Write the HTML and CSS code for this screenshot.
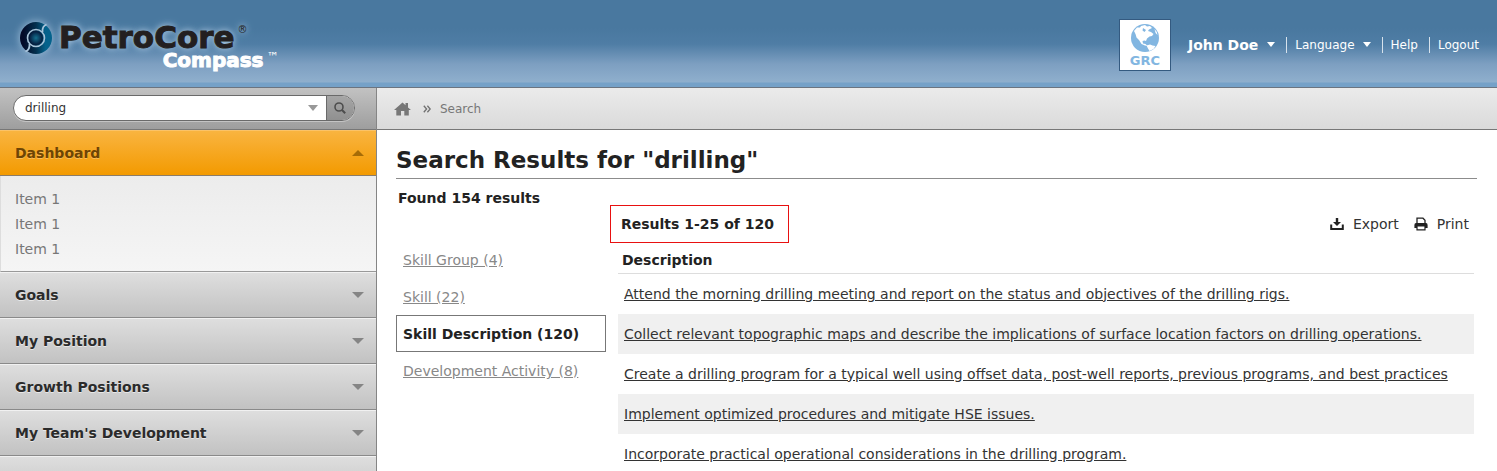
FILE: index.html
```html
<!DOCTYPE html>
<html lang="en">
<head>
<meta charset="utf-8">
<title>PetroCore Compass - Search</title>
<link rel="stylesheet" href="styles.css">
</head>
<body>
<div class="app">
  <header class="header">
    <div class="brand">
      <svg class="brand-mark" viewBox="0 0 34 34" aria-hidden="true">
        <defs>
          <linearGradient id="ring" x1="0" x2="1" y1="0" y2="0"><stop offset="0.1" stop-color="#030a28"/><stop offset="0.5" stop-color="#04304e"/><stop offset="0.8" stop-color="#04628c"/></linearGradient>
          <radialGradient id="core"><stop offset="0" stop-color="#14708f"/><stop offset="1" stop-color="#04183a"/></radialGradient>
        </defs>
        <circle cx="17" cy="17" r="16" fill="url(#ring)"/>
        <circle cx="17" cy="17" r="8.5" fill="none" stroke="#a9c4da" stroke-width="1.6"/>
        <path d="M27.5 3.5Q23 5 23.5 11M6.5 30.5Q11 29 10.5 23" fill="none" stroke="#a9c4da" stroke-width="1.8"/>
        <circle cx="17" cy="17" r="7" fill="url(#core)"/>
      </svg>
      <div class="brand-text">
        <span class="brand-name">PetroCore<sup class="brand-reg">®</sup></span>
        <span class="brand-product">Compass<sup class="brand-tm">™</sup></span>
      </div>
    </div>
    <nav class="account">
      <a class="grc" href="#">
        <svg class="globe" viewBox="0 0 28 28" aria-hidden="true">
          <circle cx="14" cy="14" r="14" fill="#82b6e1"/>
          <path fill="#fff" d="M3 7L6 3.5L9 3.5L10 2L14 1L16 2.5L19 2L21 4L18 5.5L17 7L20 8L22.5 10L21 12L18.5 12.5L16 14.5L15 17L13.5 16.5L11.5 17L12 19.5L14.5 20L16.5 22L14 21.5L10.5 20L8 16L5.5 13.5L4.5 10Z"/>
          <path fill="#fff" d="M15.5 21.5L19 20.5L21.5 21.5L24.5 22L22.5 25L18.5 27L17 24.5Z"/>
          <path fill="#fff" d="M23.5 5L25.8 8L26.5 11L24.6 9Z"/>
          <path fill="#82b6e1" d="M12 4L15 6L13.5 8L11.5 6.5Z"/>
        </svg>
        <span>GRC</span>
      </a>
      <button class="user" type="button">John Doe <svg class="caret-small" viewBox="0 0 8 5" aria-hidden="true"><path d="M0 0H8L4 5Z" fill="#fff"/></svg></button>
      <button class="account-item" type="button">Language <svg class="caret-small" viewBox="0 0 8 5" aria-hidden="true"><path d="M0 0H8L4 5Z" fill="#fff"/></svg></button>
      <a class="account-item" href="#">Help</a>
      <a class="account-item" href="#">Logout</a>
    </nav>
  </header>

  <div class="columns">
    <aside class="sidebar">
      <form class="search">
        <div class="search-field">
          <input class="search-input" type="text" value="drilling" aria-label="Search">
          <button class="search-scope" type="button" aria-label="Search options"><svg class="caret-scope" viewBox="0 0 10 6" aria-hidden="true"><path d="M0 0H10L5 6Z" fill="#999"/></svg></button>
          <button class="search-go" type="button" aria-label="Go"><svg class="lens" viewBox="0 0 12 12" aria-hidden="true"><circle cx="5" cy="5" r="4" fill="none" stroke="#4d4d4d" stroke-width="1.6"/><path d="M8 8L11.2 11.2" stroke="#4d4d4d" stroke-width="2"/></svg></button>
        </div>
      </form>
      <nav class="menu">
        <button class="menu-head menu-head-open" type="button">Dashboard <svg class="caret" viewBox="0 0 12 6" aria-hidden="true"><path d="M0 6H12L6 0Z" fill="#a66c07"/></svg></button>
        <div class="submenu">
          <a href="#">Item 1</a>
          <a href="#">Item 1</a>
          <a href="#">Item 1</a>
        </div>
        <button class="menu-head" type="button">Goals <svg class="caret" viewBox="0 0 12 6" aria-hidden="true"><path d="M0 0H12L6 6Z" fill="#858585"/></svg></button>
        <button class="menu-head" type="button">My Position <svg class="caret" viewBox="0 0 12 6" aria-hidden="true"><path d="M0 0H12L6 6Z" fill="#858585"/></svg></button>
        <button class="menu-head" type="button">Growth Positions <svg class="caret" viewBox="0 0 12 6" aria-hidden="true"><path d="M0 0H12L6 6Z" fill="#858585"/></svg></button>
        <button class="menu-head" type="button">My Team's Development <svg class="caret" viewBox="0 0 12 6" aria-hidden="true"><path d="M0 0H12L6 6Z" fill="#858585"/></svg></button>
        <div class="menu-head"></div>
      </nav>
    </aside>

    <div class="content">
      <nav class="crumbs" aria-label="Breadcrumb">
        <a class="home" href="#" aria-label="Home"><svg viewBox="0 0 17 14" aria-hidden="true"><path fill="#777" d="M8.5 0.5L11.5 3.2V1H14V5.4L17 8H14.8V13.5H10.3V9H7V13.5H2.3V8H0Z"/></svg></a>
        <svg class="chevrons" viewBox="0 0 8 8" aria-hidden="true"><path d="M0.8 0.8L3.6 4L0.8 7.2M4.4 0.8L7.2 4L4.4 7.2" fill="none" stroke="#707070" stroke-width="1.3"/></svg>
        <span>Search</span>
      </nav>
      <main class="main">
        <h1 class="title">Search Results for "drilling"</h1>
        <div class="results">
          <section class="facets">
            <p class="found">Found 154 results</p>
            <ul class="facet-list">
              <li><a href="#">Skill Group (4)</a></li>
              <li><a href="#">Skill (22)</a></li>
              <li class="facet-current">Skill Description (120)</li>
              <li><a href="#">Development Activity (8)</a></li>
            </ul>
          </section>
          <section class="listing">
            <div class="listing-bar">
              <strong class="range">Results 1-25 of 120</strong>
              <div class="tools">
                <button class="tool" type="button"><svg class="tool-icon" viewBox="0 0 14 14" aria-hidden="true"><path fill="#222" d="M5.8 1H8.2V5H11L7 9L3 5H5.8Z"/><path fill="none" stroke="#222" stroke-width="2" d="M1.2 7.5V12H12.8V7.5"/></svg>Export</button>
                <button class="tool" type="button"><svg class="tool-icon" viewBox="0 0 14 14" aria-hidden="true"><path fill="#fff" stroke="#222" stroke-width="1.3" d="M3 7V1.2H9L11 3.2V7"/><path fill="#222" d="M2 6H12Q13.6 6 13.6 8V11H0.4V8Q0.4 6 2 6Z"/><path fill="#fff" stroke="#222" stroke-width="1.2" d="M3 9H11V12.8H3Z"/></svg>Print</button>
              </div>
            </div>
            <table class="table">
              <thead><tr><th scope="col">Description</th></tr></thead>
              <tbody>
                <tr><td><a href="#">Attend the morning drilling meeting and report on the status and objectives of the drilling rigs.</a></td></tr>
                <tr><td><a href="#">Collect relevant topographic maps and describe the implications of surface location factors on drilling operations.</a></td></tr>
                <tr><td><a href="#">Create a drilling program for a typical well using offset data, post-well reports, previous programs, and best practices</a></td></tr>
                <tr><td><a href="#">Implement optimized procedures and mitigate HSE issues.</a></td></tr>
                <tr><td><a href="#">Incorporate practical operational considerations in the drilling program.</a></td></tr>
              </tbody>
            </table>
          </section>
        </div>
      </main>
    </div>
  </div>
</div>
</body>
</html>
```
FILE: styles.css
```css
* { box-sizing: border-box; }

body {
  margin: 0;
  background: #fff;
  color: #222;
  font: 14px/20px "DejaVu Sans", Verdana, sans-serif;
}

button {
  margin: 0;
  padding: 0;
  border: 0;
  background: none;
  color: inherit;
  font: inherit;
}

a { color: inherit; text-decoration: none; }
svg { display: block; flex: none; }

.app {
  display: flex;
  flex-direction: column;
  height: 100vh;
  overflow: hidden;
}

/* Header */
.header {
  display: flex;
  flex: none;
  justify-content: space-between;
  height: 88px;
  padding: 0 18px 0 19px;
  border-bottom: 1px solid #6b7480;
  background: linear-gradient(#49789f 0, #49789f 28px, #4f7da5 44px, #7d9fc1 64px, #8fafcd 82px, #75a1c8 83px, #75a1c8 100%);
}

.brand { display: flex; align-items: flex-start; gap: 6px; padding-top: 21px; }
.brand-mark { width: 34px; height: 34px; filter: drop-shadow(0 0 4px #a5c3dd); }
.brand-text { display: flex; flex-direction: column; padding-top: 2px; }
.brand-name {
  display: flex;
  align-items: flex-start;
  gap: 3px;
  color: #231f20;
  font-size: 31px;
  font-weight: bold;
  line-height: 28px;
  text-shadow: 0 0 6px #a9c5de, 0 0 10px #8fb1cf;
  -webkit-text-stroke: 1px #231f20;
}
.brand-product {
  display: flex;
  align-items: flex-start;
  align-self: flex-end;
  gap: 3px;
  margin-right: -31px;
  color: #fff;
  font-size: 20px;
  font-weight: bold;
  line-height: 18px;
  -webkit-text-stroke: 1px #fff;
}
.brand-reg, .brand-tm {
  font-size: 10px;
  font-weight: normal;
  line-height: 14px;
  -webkit-text-stroke: 0;
}
.brand-tm { font-size: 12px; line-height: 12px; }

.account { display: flex; align-items: center; padding-top: 2px; color: #fff; font-size: 12px; }
.grc {
  display: flex;
  flex-direction: column;
  align-items: center;
  width: 52px;
  height: 52px;
  margin-right: 17px;
  padding-top: 4px;
  border: 1px solid #345a80;
  background: #fff;
  color: #82b6e1;
  font-size: 13px;
  font-weight: bold;
  line-height: 17px;
}
.globe { width: 28px; height: 28px; }
.user, .account-item { display: flex; align-items: center; gap: 8px; line-height: 16px; }
.user { gap: 9px; margin-right: 11px; font-size: 14px; font-weight: bold; }
.account-item { padding: 0 11px 0 8px; border-left: 1px solid #d7e2ec; }
.account-item:last-child { padding-right: 0; }
.caret-small { width: 8px; height: 5px; }

.columns { display: flex; flex: 1; min-height: 0; }

/* Sidebar */
.sidebar {
  flex: none;
  width: 377px;
  border-right: 1px solid #858585;
  background: #d0d0d0;
  overflow: hidden;
}
.search {
  height: 42px;
  padding: 7px 21px 0 13px;
  border-bottom: 1px solid #777;
  background: linear-gradient(#c2c2c2, #9e9e9e);
}
.search-field {
  display: flex;
  height: 26px;
  border: 1px solid #6a6a6a;
  border-radius: 13px;
  background: #fff;
  box-shadow: 0 1px 0 #c4c4c4;
  overflow: hidden;
}
.search-input {
  flex: 1;
  min-width: 0;
  padding: 0 0 0 11px;
  border: 0;
  outline: 0;
  background: none;
  color: #333;
  font: 12px "DejaVu Sans", Verdana, sans-serif;
}
.search-scope { padding: 0 8px; }
.caret-scope { width: 10px; height: 6px; }
.search-go {
  display: flex;
  align-items: center;
  padding: 0 8px 0 7px;
  border-left: 1px solid #6a6a6a;
  background: linear-gradient(#a6a6a6, #909090);
}
.lens { width: 12px; height: 12px; }

.menu { display: flex; flex-direction: column; }
.menu-head {
  display: flex;
  flex: none;
  align-items: center;
  justify-content: space-between;
  width: 100%;
  height: 46px;
  padding: 0 12px 0 15px;
  border-top: 1px solid #f1f1f1;
  border-bottom: 1px solid #8a8a8a;
  background: linear-gradient(#dedede, #c2c2c2);
  color: #2b2b2b;
  font-weight: bold;
  text-shadow: 0 1px 0 #e8e8e8;
}
.menu-head-open {
  border-top-color: #fbc368;
  border-bottom-color: #8b7c68;
  background: linear-gradient(#f9b440, #f39a00);
  color: #6e4504;
  text-shadow: 0 1px 0 #f8bb59;
}
.caret { width: 12px; height: 6px; }
.submenu {
  display: flex;
  flex-direction: column;
  gap: 5px;
  padding: 13px 14px 12px;
  border-bottom: 1px solid #999;
  border-left: 1px solid #ddd;
  background: linear-gradient(#ececec, #f5f5f5);
  color: #777;
}

/* Content */
.content { flex: 1; min-width: 0; overflow: hidden; }
.crumbs {
  display: flex;
  align-items: center;
  height: 42px;
  padding: 0 17px;
  border-bottom: 1px solid #777;
  background: linear-gradient(#ebebeb, #dadada);
  color: #777;
  font-size: 12px;
}
.home svg { width: 17px; height: 14px; }
.chevrons { width: 8px; height: 8px; margin: 0 9px 0 12px; }

.main { padding: 14px 20px 0 19px; }
.title {
  margin: 0;
  padding-bottom: 2px;
  border-bottom: 1px solid #8c8c8c;
  font-size: 23px;
  line-height: 32px;
}

.results { display: grid; grid-template-columns: 210px 1fr; gap: 4px; }
.found { margin: 0; padding: 9px 0 0 2px; font-weight: bold; }
.facet-list { margin: 33px 0 0; padding: 0; list-style: none; color: #888; }
.facet-list li { height: 37px; padding: 8px 6px; border: 1px solid transparent; }
.facet-list a, .table a { text-decoration: underline; }
.facet-list .facet-current { border-color: #777; color: #222; font-weight: bold; }

.listing { padding: 26px 3px 0 0; }
.listing-bar { display: flex; align-items: center; justify-content: space-between; }
.range { padding: 8px 14px 8px 10px; border: 1px solid #e81111; }
.tools { display: flex; gap: 15px; padding-right: 5px; color: #333; }
.tool { display: flex; align-items: center; gap: 9px; }
.tool-icon { width: 14px; height: 14px; }

.table { width: calc(100% - 8px); margin-left: 8px; border-collapse: collapse; }
.table th { padding: 7px 4px 3px; border-bottom: 1px solid #ddd; text-align: left; }
.table td { height: 40px; padding: 0 6px; color: #333; white-space: nowrap; }
.table tbody tr:nth-child(even) { background: #f0f0f0; }
```
